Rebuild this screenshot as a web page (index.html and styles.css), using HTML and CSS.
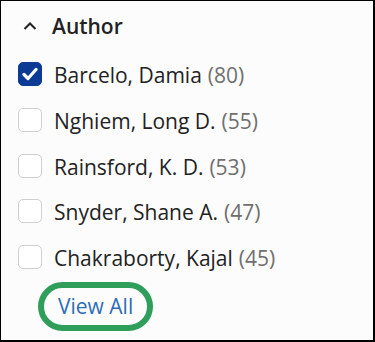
FILE: index.html
```html
<!DOCTYPE html>
<html lang="en">
<head>
<meta charset="utf-8">
<link rel="stylesheet" href="styles.css">
</head>
<body>
<div class="panel">
  <div class="header">
    <svg class="chev" width="14" height="10" viewBox="0 0 14 10"><path d="M1.5 8 L7 2.5 L12.5 8" fill="none" stroke="#222" stroke-width="2"/></svg>
    <span class="title">Author</span>
  </div>
  <ul class="list">
    <li class="row"><span class="box checked"><svg width="16" height="14" viewBox="0 0 16 14"><path d="M2 7.5 L6 11.5 L14 2.5" fill="none" stroke="#fff" stroke-width="3.2" stroke-linecap="round" stroke-linejoin="round"/></svg></span><span class="name">Barcelo, Damia</span><span class="count">(80)</span></li>
    <li class="row"><span class="box"></span><span class="name">Nghiem, Long D.</span><span class="count">(55)</span></li>
    <li class="row"><span class="box"></span><span class="name">Rainsford, K. D.</span><span class="count">(53)</span></li>
    <li class="row"><span class="box"></span><span class="name">Snyder, Shane A.</span><span class="count">(47)</span></li>
    <li class="row"><span class="box"></span><span class="name">Chakraborty, Kajal</span><span class="count">(45)</span></li>
  </ul>
  <a class="viewall" href="#">View All</a>
</div>
</body>
</html>
```
FILE: styles.css
```css
html, body {
  margin: 0;
  padding: 0;
}
body {
  font-family: "Open Sans", "Liberation Sans", sans-serif;
  background: #fcfcfc;
}
.panel {
  box-sizing: border-box;
  width: 375px;
  height: 342px;
  border-style: solid;
  border-color: #000;
  border-width: 1px 2px 2px 1px;
  background: #fcfcfc;
  padding: 11px 0 0 17px;
}
.header {
  display: flex;
  align-items: center;
  height: 28px;
}
.chev {
  margin-left: 5px;
  display: block;
}
.title {
  margin-left: 15px;
  font-size: 21px;
  font-weight: 600;
  color: #222;
  line-height: 28px;
}
.list {
  list-style: none;
  margin: 0;
  padding: 0;
  margin-top: 22px;
  display: flex;
  flex-direction: column;
  gap: 21.75px;
}
.row {
  display: flex;
  align-items: center;
  height: 24px;
  font-size: 21px;
  white-space: nowrap;
}
.box {
  box-sizing: border-box;
  width: 24px;
  height: 24px;
  border: 1.5px solid #cfcfcf;
  border-radius: 5px;
  background: #fff;
  margin-right: 12px;
  display: flex;
  align-items: center;
  justify-content: center;
  flex: none;
}
.box.checked {
  background: #0c3a95;
  border-color: #0c3a95;
}
.box svg { display: block; }
.name {
  color: #222;
  position: relative;
  top: 1px;
}
.count {
  color: #6f6f6f;
  margin-left: 6px;
  position: relative;
  top: 1px;
}
.viewall {
  display: block;
  width: fit-content;
  margin-top: 19px;
  margin-left: 26px;
  padding: 0 14px;
  height: 37px;
  line-height: 37px;
  font-size: 21px;
  color: #2d6cb5;
  text-decoration: none;
  border-radius: 20px;
  outline: 6px solid #2f9e5b;
  outline-offset: 0;
}
```
